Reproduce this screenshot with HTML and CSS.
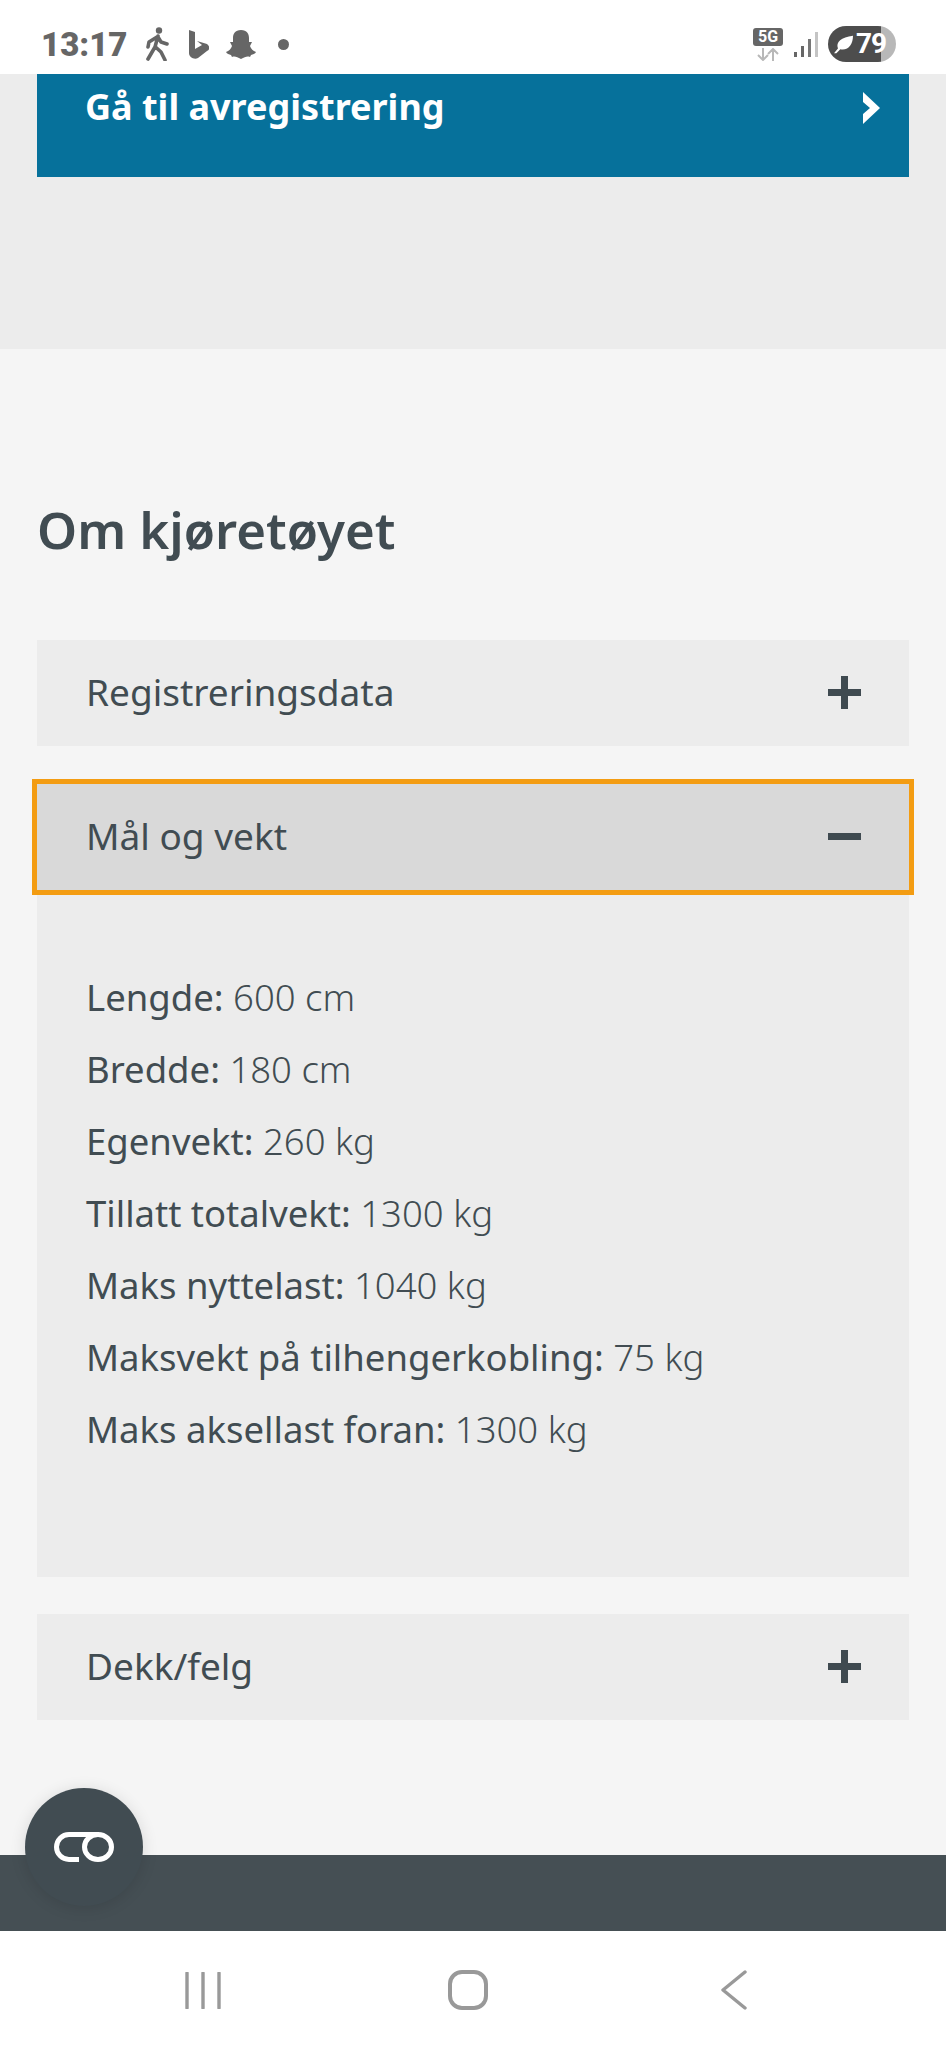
FILE: index.html
```html
<!doctype html>
<html>
<head>
<meta charset="utf-8">
<title>Om kjøretøyet</title>
<link rel="stylesheet" href="styles.css">
</head>
<body>
<div id="wrapper">
  <div class="statusbar">
    <span class="time">13:17</span>
    <svg class="ic-walk" viewBox="0 0 24 34" width="24" height="34"><circle cx="13" cy="3.5" r="3.2" fill="#666"/><path d="M12 9 L9 20 L2 32 M9.5 20 L15 25 L19 33 M11 10 L3 15 L2 20 M12 10 L15 15 L21 17" fill="none" stroke="#666" stroke-width="3.6" stroke-linecap="round" stroke-linejoin="round"/></svg>
    <svg class="ic-bing" viewBox="0 0 20 29" width="20" height="29"><path d="M0 0 L6 2 V19 L13 15 L8 11 L18 14 C21 16 21 20 18 21 L9 28 C5 30 0 27 0 23 Z" fill="#666"/></svg>
    <svg class="ic-snap" viewBox="0 0 30 29" width="30" height="29"><path d="M15 0 C21 0 23 4 23 8 V12 L26 12 L24 16 C25 19 27 21 30 22 C29 24 27 24 25 25 L24 27 C21 26 19 27 15 29 C11 27 9 26 6 27 L5 25 C3 24 1 24 0 22 C3 21 5 19 6 16 L4 12 L7 12 V8 C7 4 9 0 15 0 Z" fill="#666"/></svg>
    <span class="dot"></span>
    <span class="status-right">
      <span class="net">
        <span class="net-label">5G</span>
        <svg viewBox="0 0 22 13" width="22" height="13"><path d="M6 0 V12 M1 7 L6 12 L11 7 M16 13 V1 M11 6 L16 1 L21 6" fill="none" stroke="#b8b8b8" stroke-width="2"/></svg>
      </span>
      <svg class="ic-signal" viewBox="0 0 24 25" width="24" height="25"><rect x="0" y="20" width="3" height="5" fill="#666"/><rect x="7" y="14" width="3" height="11" fill="#666"/><rect x="14" y="7" width="3" height="18" fill="#777"/><rect x="21" y="0" width="3" height="25" fill="#c4c4c4"/></svg>
      <span class="battery">
        <svg viewBox="0 0 26 24" width="21" height="19"><path d="M1 23 L6 17 C3 9 10 3 25 1 C25 12 19 20 9 18 L4 23 Z" fill="#fff"/></svg>
        <span class="battery-num">79</span>
      </span>
    </span>
  </div>

  <div class="top">
    <a class="cta">
      <span>Gå til avregistrering</span>
      <svg viewBox="0 0 17 32" width="17" height="32"><path d="M0 0 L17 16 L0 32 V22 L7 16 L0 10 Z" fill="#fff"/></svg>
    </a>
  </div>

  <div class="main">
    <h2>Om kjøretøyet</h2>

    <div class="acc">
      <span>Registreringsdata</span>
      <svg viewBox="0 0 33 33" width="33" height="33"><path d="M13 0 H20 V13 H33 V20 H20 V33 H13 V20 H0 V13 H13 Z" fill="#3f4a50"/></svg>
    </div>

    <div class="acc open">
      <span>Mål og vekt</span>
      <svg viewBox="0 0 33 7" width="33" height="7"><rect width="33" height="7" fill="#3f4a50"/></svg>
    </div>
    <ul class="panel">
      <li><b>Lengde:</b> 600 cm</li>
      <li><b>Bredde:</b> 180 cm</li>
      <li><b>Egenvekt:</b> 260 kg</li>
      <li><b>Tillatt totalvekt:</b> 1300 kg</li>
      <li><b>Maks nyttelast:</b> 1040 kg</li>
      <li><b>Maksvekt på tilhengerkobling:</b> 75 kg</li>
      <li><b>Maks aksellast foran:</b> 1300 kg</li>
    </ul>

    <div class="acc">
      <span>Dekk/felg</span>
      <svg viewBox="0 0 33 33" width="33" height="33"><path d="M13 0 H20 V13 H33 V20 H20 V33 H13 V20 H0 V13 H13 Z" fill="#3f4a50"/></svg>
    </div>
  </div>

  <div class="footer"></div>

  <div class="navbar">
    <svg viewBox="0 0 36 37" width="36" height="37"><path d="M2 1 V36 M18 1 V36 M34 1 V36" fill="none" stroke="#999" stroke-width="3.4" stroke-linecap="round"/></svg>
    <svg class="ic-home" viewBox="0 0 40 40" width="40" height="40"><rect x="2" y="2" width="36" height="36" rx="12" fill="none" stroke="#999" stroke-width="4"/></svg>
    <svg viewBox="0 0 26 40" width="26" height="40"><path d="M24 2 L2 20 L24 38" fill="none" stroke="#999" stroke-width="3.4" stroke-linecap="round" stroke-linejoin="round"/></svg>
  </div>

  <div class="fab">
    <svg viewBox="0 0 60 30" width="60" height="30"><path d="M25 27.5 H15 A12.5 12.5 0 0 1 15 2.5 H45" fill="none" stroke="#fff" stroke-width="5"/><ellipse cx="44" cy="15" rx="13.5" ry="12.5" fill="none" stroke="#fff" stroke-width="5"/></svg>
  </div>
</div>
</body>
</html>
```

FILE: styles.css
```css
html, body { border:0; margin:0; padding:0; height:100%; }
body {
font-family:"Noto Sans", Lato, sans-serif;
background:#fff;
color:#414c52;
}
svg { display:block; flex:none; }
ul { margin:0; padding:0; list-style:none; }
#wrapper { position:relative; width:946px; height:2049px; overflow:hidden; display:flex; flex-direction:column; }

.statusbar { height:74px; flex:none; background:#fff; display:flex; align-items:center; padding:14px 50px 0 41px; box-sizing:border-box; color:#666; }
.time { font-family:Roboto, sans-serif; font-weight:900; font-size:33px; width:84px; margin-right:21px; }
.ic-walk { margin-right:19px; }
.ic-bing { margin-right:17px; }
.dot { width:11px; height:11px; border-radius:50%; background:#666; margin-left:22px; }
.status-right { margin-left:auto; display:flex; align-items:center; }
.net { display:flex; flex-direction:column; align-items:center; gap:2px; width:30px; margin-right:11px; }
.net-label { background:#666; color:#fff; border-radius:3px; width:30px; height:18px; text-align:center; font:700 16px/18px Roboto, sans-serif; }
.ic-signal { margin-right:10px; }
.battery { width:68px; height:36px; border-radius:18px; background:linear-gradient(90deg, #4d4d4d 53px, #b8b8b8 53px); display:flex; align-items:center; padding-left:5px; box-sizing:border-box; }
.battery-num { font:700 28px/36px Roboto, sans-serif; color:#fff; margin-left:2px; letter-spacing:-1px; }

.top { height:275px; flex:none; background:#ececec; padding:0 37px; box-sizing:border-box; }
.cta { display:flex; justify-content:space-between; height:103px; background:#06719b; color:#fff; font-weight:700; font-size:36px; line-height:66px; padding:0 29px 0 48px; box-sizing:border-box; }
.cta svg { margin-top:18px; }

.main { flex:1; background:#f5f5f5; padding:0 37px; }
.main h2 { margin:0; padding-top:147px; font-size:51px; line-height:66px; font-weight:600; color:#414c52; height:291px; box-sizing:border-box; }

.acc { height:106px; background:#ececec; display:flex; align-items:center; justify-content:space-between; padding:0 48px 4px 49px; box-sizing:border-box; font-size:37px; margin-bottom:38px; }
.acc svg { margin-top:2px; }
.acc.open { background:#d9d9d9; outline:5px solid #f39c12; margin-bottom:0; }
.panel { background:#ececec; height:687px; box-sizing:border-box; padding:71px 49px 0; margin-bottom:37px; font-size:36.5px; line-height:72px; font-weight:300; }
.panel b { font-weight:400; }

.footer { height:76px; flex:none; background:#454f54; }
.navbar { height:118px; flex:none; background:#fff; display:flex; align-items:center; padding:0 199px 0 185px; box-sizing:border-box; justify-content:space-between; }
.ic-home { margin-right:6px; }

.fab { position:absolute; left:25px; top:1788px; width:118px; height:118px; border-radius:50%; background:#414c52; display:flex; align-items:center; justify-content:center; box-shadow:0 2px 16px rgba(0,0,0,.12); }
```
